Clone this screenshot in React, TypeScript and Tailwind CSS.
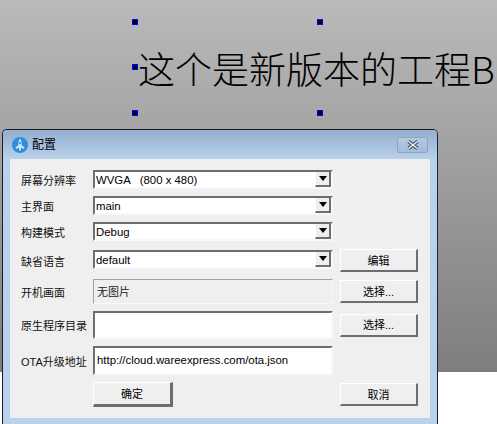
const uiFont = { fontFamily: '"Liberation Sans", "Noto Sans CJK SC", sans-serif' }

function Handle({ className }: { className: string }) {
  return <div className={`absolute w-[6px] h-[6px] bg-black border border-[#0000ff] ${className}`} />
}

function Caret() {
  return <div className="w-0 h-0 border-l-[4px] border-r-[4px] border-t-[5px] border-l-transparent border-r-transparent border-t-black" />
}

function Combo({ value, className = '' }: { value: string; className?: string }) {
  return (
    <div className={`w-[240px] h-[19px] flex bg-white border-t-2 border-l-2 border-t-[#6e6e6e] border-l-[#6e6e6e] border-r-2 border-b-2 border-r-[#f8f8f8] border-b-[#f8f8f8] ${className}`}>
      <div className="flex-1 pl-[1px] text-[11.4px] leading-[17px] text-black whitespace-pre">{value}</div>
      <div className="w-[16px] flex items-center justify-center bg-[#efefef] border-r-2 border-b-2 border-r-[#6e6e6e] border-b-[#6e6e6e] border-l border-l-white">
        <Caret />
      </div>
    </div>
  )
}

function Button({ label, className = '' }: { label: string; className?: string }) {
  return (
    <button className={`flex items-center justify-center pt-[2px] bg-[#efefef] text-[11px] text-black border-t border-l border-t-white border-l-white border-r-2 border-b-2 border-r-[#6e6e6e] border-b-[#6e6e6e] ${className}`}>
      {label}
    </button>
  )
}

function Label({ text }: { text: string }) {
  return <div className="w-[72px] shrink-0 pt-[2px] text-[11px] leading-[14px] text-[#111] whitespace-nowrap">{text}</div>
}

export default function App() {
  return (
    <div className="relative w-[497px] h-[424px] bg-white overflow-hidden" style={uiFont}>
      {/* canvas */}
      <div className="relative h-[372px] bg-gradient-to-b from-[#bababa] to-[#7e7e7e] overflow-hidden">
        <div className="pl-[138px] pt-[47px] text-[37px] leading-[42px] font-light text-black whitespace-nowrap" style={{ fontFamily: '"Noto Sans CJK SC", sans-serif' }}>
          这个是新版本的工程B
        </div>
        <Handle className="left-[132px] top-[19px]" />
        <Handle className="left-[317px] top-[19px]" />
        <Handle className="left-[132px] top-[64px]" />
        <Handle className="left-[132px] top-[110px]" />
        <Handle className="left-[317px] top-[110px]" />
      </div>

      {/* dialog */}
      <div className="absolute left-[2px] top-[129px] w-[436px] h-[296px] flex flex-col bg-[#b9d1ea] border border-[#1c1c1c] border-r-[#0f2a33] rounded-t-[5px]">
        <div className="h-[29px] shrink-0 flex items-center pl-[9px] pr-[9px] bg-gradient-to-b from-[#93aecf] to-[#b9d1ea] rounded-t-[4px]">
          <svg width="16" height="16" viewBox="0 0 16 16">
            <circle cx="8" cy="8" r="8" fill="#2f8fdc" />
            <path d="M8 1.5 C9.4 3.5 9.8 5.5 9.6 8 L12.5 10.5 L11.5 12 L9 10.5 L9 13.5 L7 13.5 L7 10.5 L4.5 12 L3.5 10.5 L6.4 8 C6.2 5.5 6.6 3.5 8 1.5 Z" fill="#cfe4f6" />
            <circle cx="8" cy="6" r="1.1" fill="#2f8fdc" />
          </svg>
          <div className="ml-[4px] text-[12px] text-black">配置</div>
          <div className="ml-auto w-[31px] h-[16px] flex items-center justify-center rounded-[2px] border border-[#8ea5c0] bg-gradient-to-b from-[#b4c9e2] to-[#a3bcd9]">
            <svg width="14" height="10" viewBox="0 0 14 10">
              <path d="M2.5 1.5 L11.5 8.5 M11.5 1.5 L2.5 8.5" stroke="#4a5568" strokeWidth="3.5" />
              <path d="M2.5 1.5 L11.5 8.5 M11.5 1.5 L2.5 8.5" stroke="#e8eef5" strokeWidth="1.5" />
            </svg>
          </div>
        </div>

        <div className="mx-[7px] h-[259px] shrink-0 bg-[#efefef] pl-[11px] pt-[11px] flex flex-col">
          <div className="flex items-center h-[19px]">
            <Label text="屏幕分辨率" />
            <Combo value="WVGA   (800 x 480)" />
          </div>
          <div className="flex items-center h-[19px] mt-[7px]">
            <Label text="主界面" />
            <Combo value="main" />
          </div>
          <div className="flex items-center h-[19px] mt-[7px]">
            <Label text="构建模式" />
            <Combo value="Debug" />
          </div>
          <div className="flex items-center h-[23px] mt-[8px]">
            <Label text="缺省语言" />
            <Combo value="default" className="mb-[2px]" />
            <Button label="编辑" className="ml-[7px] w-[78px] h-[23px]" />
          </div>
          <div className="flex items-center h-[25px] mt-[7px]">
            <Label text="开机画面" />
            <div className="w-[240px] h-[25px] pl-[3px] pt-[1px] flex items-center text-[11px] text-[#222] bg-[#efefef] border-t border-l border-t-[#a0a0a0] border-l-[#a0a0a0] border-r border-b border-r-[#f8f8f8] border-b-[#f8f8f8]">无图片</div>
            <Button label="选择..." className="ml-[7px] w-[78px] h-[23px]" />
          </div>
          <div className="flex items-center h-[28px] mt-[7px]">
            <Label text="原生程序目录" />
            <div className="w-[240px] h-[28px] bg-white border-t-2 border-l-2 border-t-[#6e6e6e] border-l-[#6e6e6e] border-r-2 border-b-2 border-r-[#f8f8f8] border-b-[#f8f8f8]" />
            <Button label="选择..." className="ml-[7px] w-[78px] h-[23px]" />
          </div>
          <div className="flex items-center h-[29px] mt-[7px]">
            <Label text="OTA升级地址" />
            <div className="w-[240px] h-[29px] pl-[2px] flex items-center text-[11.4px] text-black bg-white border-t-2 border-l-2 border-t-[#6e6e6e] border-l-[#6e6e6e] border-r-2 border-b-2 border-r-[#f8f8f8] border-b-[#f8f8f8]">
              http://cloud.wareexpress.com/ota.json
            </div>
          </div>
          <div className="flex items-center h-[25px] mt-[7px] pl-[72px]">
            <Button label="确定" className="w-[80px] h-[25px] border-r-[3px] border-b-[3px]" />
            <Button label="取消" className="ml-[167px] w-[78px] h-[23px]" />
          </div>
        </div>
      </div>
    </div>
  )
}
